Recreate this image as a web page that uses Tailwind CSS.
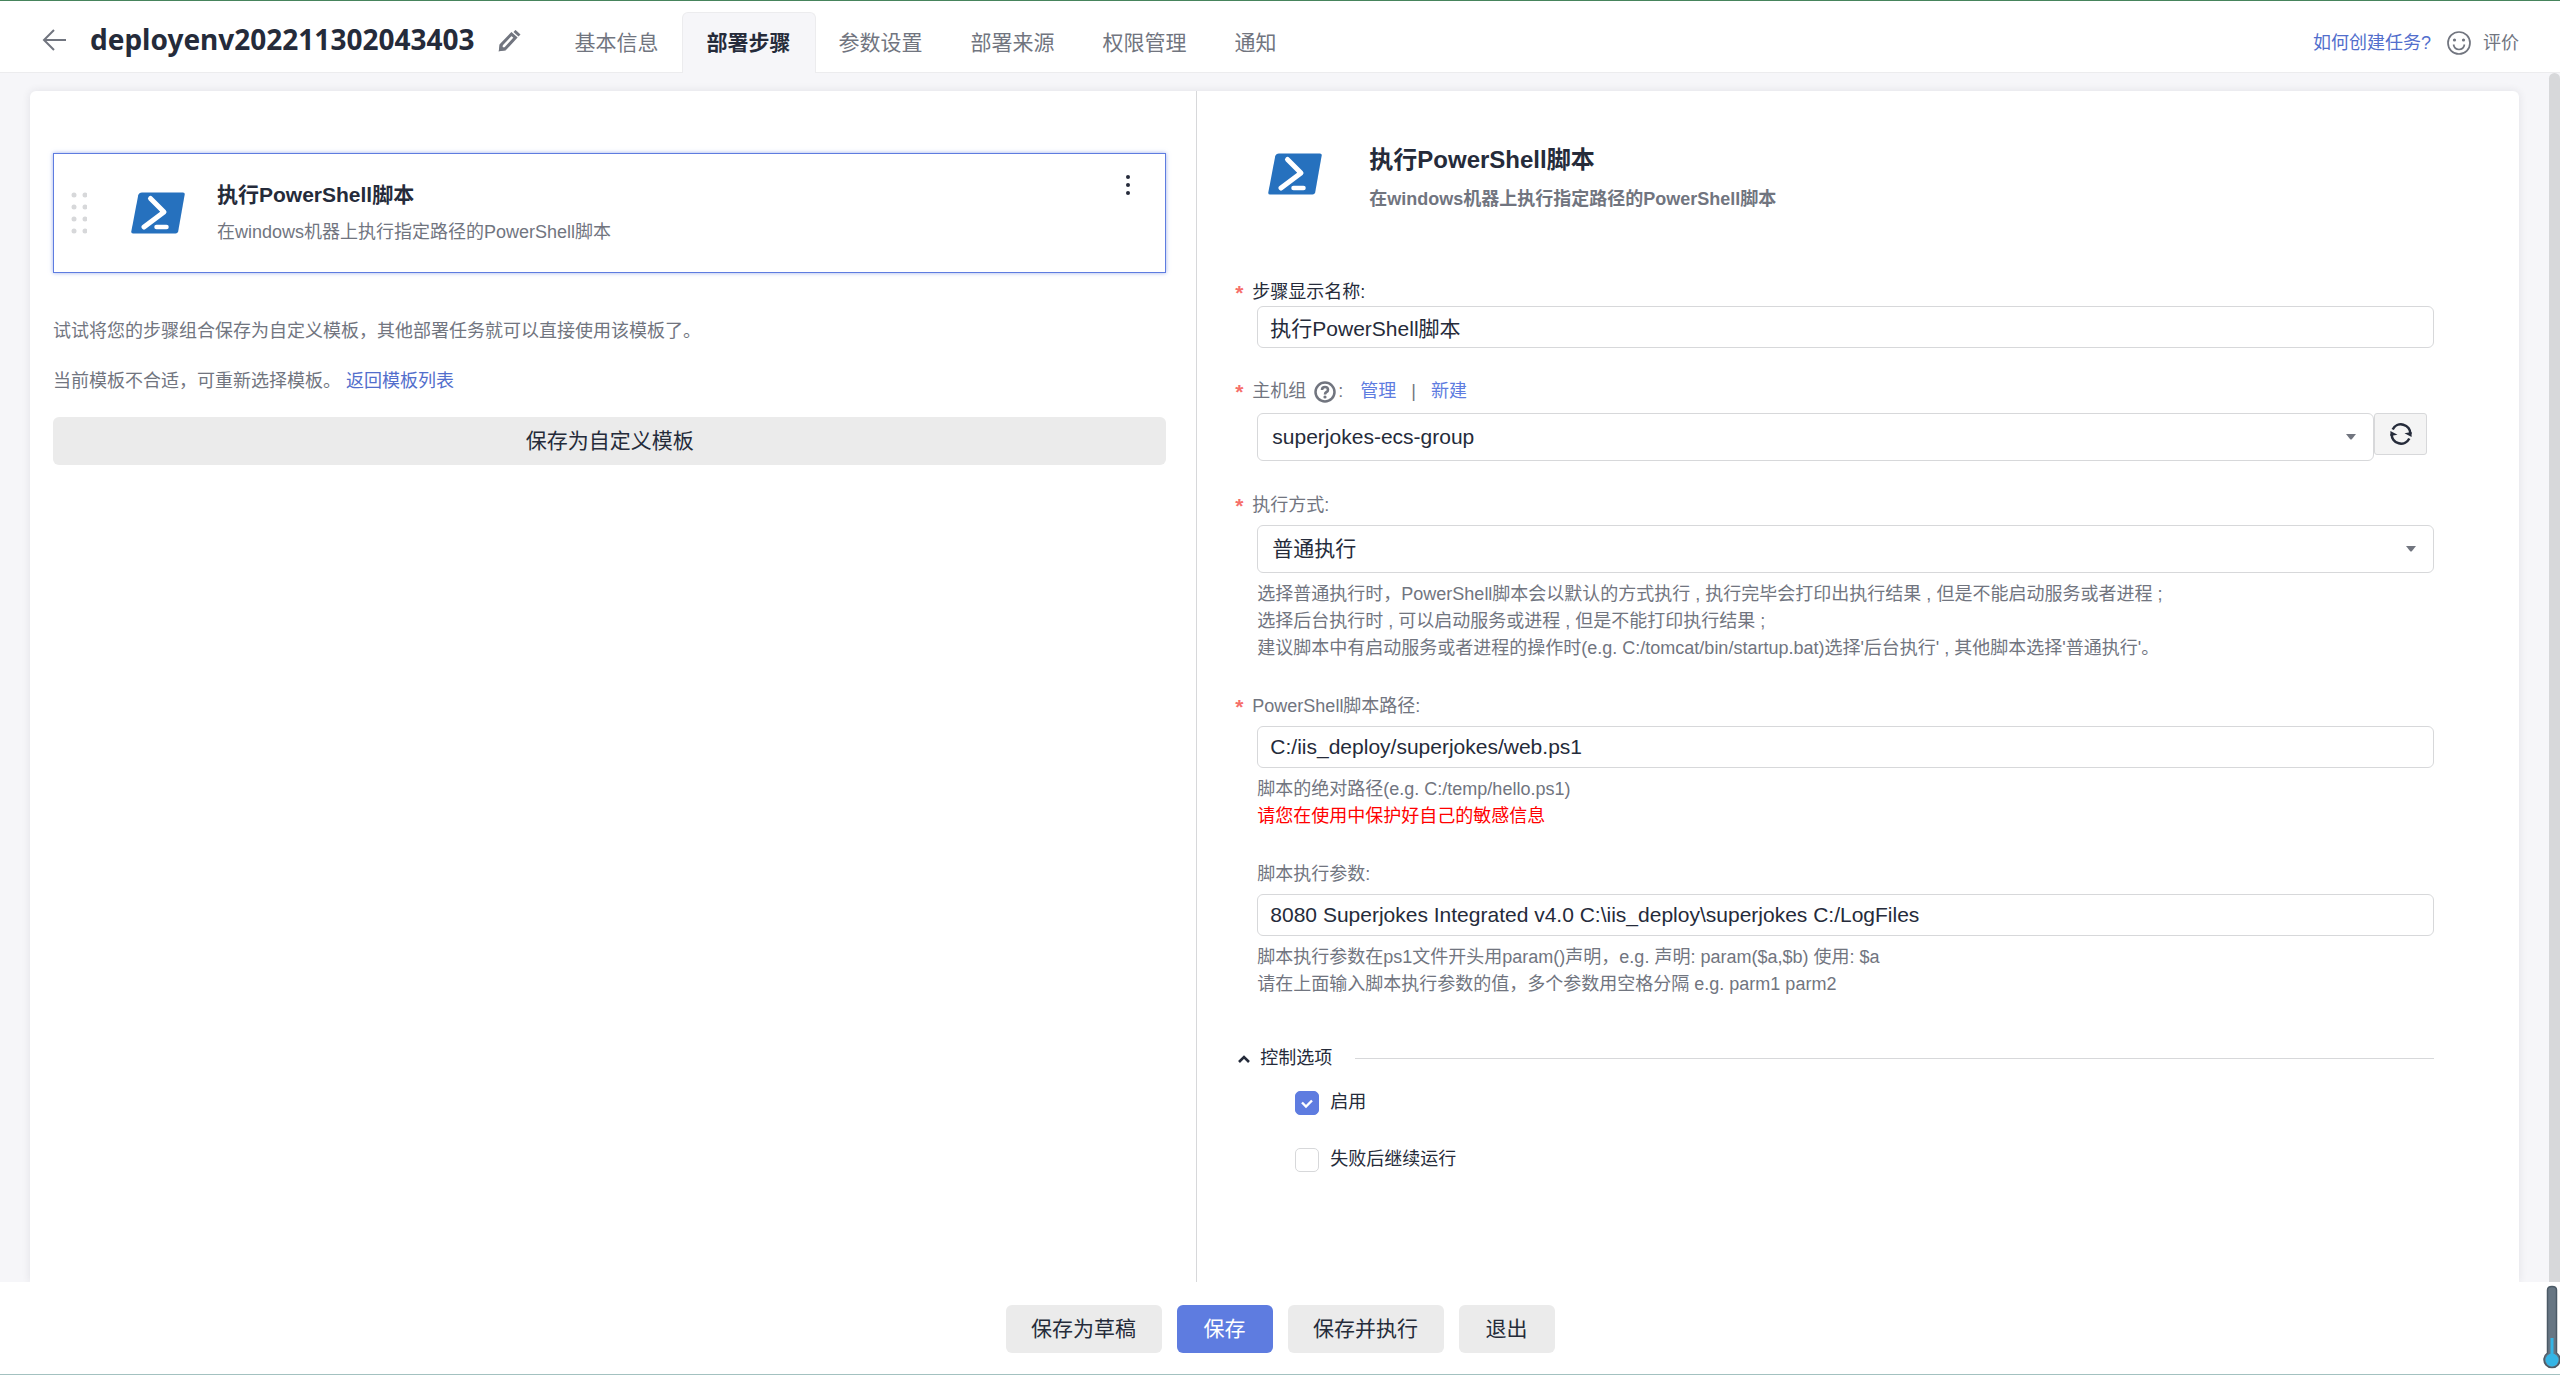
<!DOCTYPE html>
<html lang="zh-CN">
<head>
<meta charset="utf-8">
<meta name="viewport" content="width=device-width, initial-scale=1">
<title>deployenv202211302043403</title>
<script src="https://cdn.jsdelivr.net/npm/@tailwindcss/browser@4"></script>
</head>
<body class="flex min-h-screen flex-col bg-[#f6f6f9] font-['Liberation_Sans','Noto_Sans_CJK_SC',sans-serif] text-[18px] leading-[27px] text-[#71757f]">
  <svg class="hidden">
    <symbol id="powershell" viewBox="0 0 54 42">
      <path d="M11 .500H52q2 0 1.700 2L47.200 39.200q-.500 2.300-2.700 2.300H2q-2 0-1.700-2L7.200 3.200Q8 .500 11 .500Z" fill="#2671be"/>
      <path d="M19.500 6.500 33 20 13 35" fill="none" stroke="#fff" stroke-width="5" stroke-linecap="round" stroke-linejoin="round"/>
      <path d="M25.500 35h10" fill="none" stroke="#fff" stroke-width="4.500" stroke-linecap="round"/>
    </symbol>
    <symbol id="caret" viewBox="0 0 10 6"><path d="M0 0h10L6 5q-1 1-2 0Z" fill="#71757f"/></symbol>
  </svg>

  <header class="flex h-[73px] shrink-0 items-stretch border-t border-b border-t-[#46845c] border-b-[#ececee] bg-white pr-[41px] pl-[42px]">
    <button type="button" aria-label="返回" class="mr-[24px] flex items-center pt-[6px]">
      <svg class="h-[22px] w-[24px]" viewBox="0 0 24 22" fill="none" stroke="#71757f" stroke-width="2"><path d="M24 11H2M12 1 2 11l10 10"/></svg>
    </button>
    <h1 class="flex items-center pt-[4px] font-['Noto_Sans',sans-serif] text-[28px] leading-[40px] font-bold text-[#252b3a]">deployenv202211302043403</h1>
    <button type="button" aria-label="编辑名称" class="mr-[30px] ml-[23px] flex items-center pt-[8px]">
      <svg class="h-[22px] w-[23px]" viewBox="0 0 23 22" fill="none" stroke="#71757f" stroke-width="3"><path d="M2.500 19.500 3.500 14.500 13.500 4 17.500 7.500 7.500 18.500Z"/><path d="M16.500 1 21.500 5.500"/><path d="M1 21 1.500 14 8 20.500Z" fill="#71757f" stroke="none"/></svg>
    </button>
    <nav class="-mb-px flex items-stretch pt-[11px] text-[21px] leading-[30px]">
      <a href="#" class="flex items-center px-[24px]">基本信息</a>
      <a href="#" aria-current="page" class="-mx-px flex items-center rounded-t-[6px] border border-b-0 border-[#ececee] bg-[#f6f6f9] px-[24px] font-bold text-[#252b3a]">部署步骤</a>
      <a href="#" class="flex items-center px-[24px]">参数设置</a>
      <a href="#" class="flex items-center px-[24px]">部署来源</a>
      <a href="#" class="flex items-center px-[24px]">权限管理</a>
      <a href="#" class="flex items-center px-[24px]">通知</a>
    </nav>
    <div class="ml-auto flex items-center pt-[13px]">
      <a href="#" class="text-[#526ecc]">如何创建任务?</a>
      <button type="button" class="ml-[16px] flex items-center gap-[12px]">
        <svg class="size-[24px]" viewBox="0 0 24 24" fill="none" stroke="#71757f" stroke-width="1.700"><circle cx="12" cy="12" r="11"/><path d="M6.500 13.500q1 5 5.500 5t5.500-5"/><circle cx="7.500" cy="9" r="1.600" fill="#71757f" stroke="none"/><circle cx="16.500" cy="9" r="1.600" fill="#71757f" stroke="none"/></svg>
        评价
      </button>
    </div>
  </header>

  <main class="flex grow">
    <div class="mt-[18px] mr-[30px] ml-[30px] flex grow rounded-t-[6px] bg-white shadow-[0_0_8px_rgba(37,43,58,0.1)]">
      <section class="w-[46.9%] border-r border-[#d7d8da] pt-[62px] pr-[30px] pl-[23px]">
        <article class="flex h-[120px] items-start border border-[#5e7ce0] pr-[33px] pl-[17px] shadow-[0_0_4px_rgba(94,124,224,0.6)]">
          <svg class="mt-[37px] h-[44px] w-[16px]" viewBox="0 0 16 44" fill="#d7d8da"><circle cx="3" cy="4" r="2.500"/><circle cx="14" cy="4" r="2.500"/><circle cx="3" cy="16" r="2.500"/><circle cx="14" cy="16" r="2.500"/><circle cx="3" cy="28" r="2.500"/><circle cx="14" cy="28" r="2.500"/><circle cx="3" cy="40" r="2.500"/><circle cx="14" cy="40" r="2.500"/></svg>
          <svg class="mt-[38px] ml-[44px] h-[42px] w-[54px]"><use href="#powershell"/></svg>
          <div class="ml-[32px] grow pt-[26px]">
            <h2 class="text-[21px] leading-[30px] font-bold text-[#252b3a]">执行PowerShell脚本</h2>
            <p class="mt-[9px]">在windows机器上执行指定路径的PowerShell脚本</p>
          </div>
          <button type="button" aria-label="更多操作" class="mt-[20px]">
            <svg class="h-[22px] w-[8px]" viewBox="0 0 8 22" fill="#252b3a"><circle cx="4" cy="3" r="2"/><circle cx="4" cy="11" r="2"/><circle cx="4" cy="19" r="2"/></svg>
          </button>
        </article>
        <p class="mt-[45px]">试试将您的步骤组合保存为自定义模板，其他部署任务就可以直接使用该模板了。</p>
        <p class="mt-[23px]">当前模板不合适，可重新选择模板。 <a href="#" class="text-[#526ecc]">返回模板列表</a></p>
        <button type="button" class="mt-[22px] h-[48px] w-full rounded-[6px] bg-[#ebebeb] text-[21px] leading-[30px] text-[#252b3a]">保存为自定义模板</button>
      </section>

      <section class="grow pt-[54px] pr-[85px] pb-[60px] pl-[38px]">
        <div class="flex items-start">
          <svg class="mt-[8px] ml-[33px] h-[42px] w-[54px]"><use href="#powershell"/></svg>
          <div class="ml-[47px]">
            <h2 class="text-[24px] leading-[30px] font-bold text-[#252b3a]">执行PowerShell脚本</h2>
            <p class="mt-[11px] font-bold">在windows机器上执行指定路径的PowerShell脚本</p>
          </div>
        </div>

        <form class="mt-[66px]">
          <div>
            <label for="name" class="flex text-[#252b3a]"><span class="w-[17px] text-[21px] font-bold text-[#f66f6a]">*</span>步骤显示名称:</label>
            <div class="pl-[22px]">
              <input id="name" type="text" value="执行PowerShell脚本" class="h-[42px] w-full rounded-[6px] border border-[#d7d8da] px-[12px] text-[21px] leading-[30px] text-[#252b3a]">
            </div>
          </div>

          <div class="mt-[30px]">
            <div class="flex items-center">
              <label for="group" class="flex items-center"><span class="w-[17px] text-[21px] font-bold text-[#f66f6a]">*</span>主机组
                <svg class="ml-[8px] size-[22px]" viewBox="0 0 22 22" fill="none" stroke="#71757f" stroke-width="2.500"><circle cx="11" cy="11" r="9.500"/><path d="M8 9q0-3 3-3t3 2.700q0 1.500-1.500 2.300T11 13.500" stroke-width="2.600"/><circle cx="11" cy="16" r="1.600" fill="#71757f" stroke="none"/></svg>
                <span class="ml-[2px]">:</span></label>
              <a href="#" class="ml-[17px] text-[#5e7ce0]">管理</a>
              <span class="mx-[15px]">|</span>
              <a href="#" class="text-[#5e7ce0]">新建</a>
            </div>
            <div class="mt-[8px] flex items-start pr-[7px] pl-[22px]">
              <div class="relative grow">
                <select id="group" class="h-[48px] w-full appearance-none rounded-[6px] border border-[#d7d8da] bg-white px-[14px] text-[21px] leading-[30px] text-[#252b3a]"><option>superjokes-ecs-group</option></select>
                <svg class="pointer-events-none absolute top-[21px] right-[18px] h-[6px] w-[10px]"><use href="#caret"/></svg>
              </div>
              <button type="button" aria-label="刷新" class="flex h-[42px] w-[53px] items-center justify-center rounded-[3px] border border-[#d7d8da] bg-[#f4f4f4]">
                <svg class="size-[22px]" viewBox="0 0 22 22" fill="none" stroke="#252b3a" stroke-width="2.600"><path d="M2.700 6.500A9.300 9.300 0 0 1 20.300 11"/><path d="M19.300 15.500A9.300 9.300 0 0 1 1.700 11"/><path d="M14.500 10.200 21.600 9V14Z M7.500 11.800.4 13V8Z" fill="#252b3a" stroke="none"/></svg>
              </button>
            </div>
          </div>

          <div class="mt-[31px]">
            <label for="mode" class="flex"><span class="w-[17px] text-[21px] font-bold text-[#f66f6a]">*</span>执行方式:</label>
            <div class="mt-[6px] pl-[22px]">
              <div class="relative">
                <select id="mode" class="h-[48px] w-full appearance-none rounded-[6px] border border-[#d7d8da] bg-white px-[14px] text-[21px] leading-[30px] text-[#252b3a]"><option>普通执行</option></select>
                <svg class="pointer-events-none absolute top-[21px] right-[18px] h-[6px] w-[10px]"><use href="#caret"/></svg>
              </div>
              <p class="mt-[8px]">选择普通执行时，PowerShell脚本会以默认的方式执行 , 执行完毕会打印出执行结果 , 但是不能启动服务或者进程 ;<br>选择后台执行时 , 可以启动服务或进程 , 但是不能打印执行结果 ;<br>建议脚本中有启动服务或者进程的操作时(e.g. C:/tomcat/bin/startup.bat)选择'后台执行' , 其他脚本选择'普通执行'。</p>
            </div>
          </div>

          <div class="mt-[31px]">
            <label for="path" class="flex"><span class="w-[17px] text-[21px] font-bold text-[#f66f6a]">*</span>PowerShell脚本路径:</label>
            <div class="mt-[6px] pl-[22px]">
              <input id="path" type="text" value="C:/iis_deploy/superjokes/web.ps1" class="h-[42px] w-full rounded-[6px] border border-[#d7d8da] px-[12px] text-[21px] leading-[30px] text-[#252b3a]">
              <p class="mt-[8px]">脚本的绝对路径(e.g. C:/temp/hello.ps1)</p>
              <p class="text-[#ff0000]">请您在使用中保护好自己的敏感信息</p>
            </div>
          </div>

          <div class="mt-[31px] pl-[22px]">
            <label for="params" class="flex">脚本执行参数:</label>
            <input id="params" type="text" value="8080 Superjokes Integrated v4.0 C:\iis_deploy\superjokes C:/LogFiles" class="mt-[6px] h-[42px] w-full rounded-[6px] border border-[#d7d8da] px-[12px] text-[21px] leading-[30px] text-[#252b3a]">
            <p class="mt-[8px]">脚本执行参数在ps1文件开头用param()声明，e.g. 声明: param($a,$b) 使用: $a<br>请在上面输入脚本执行参数的值，多个参数用空格分隔 e.g. parm1 parm2</p>
          </div>

          <fieldset class="mt-[47px] text-[#252b3a]">
            <div class="flex items-center">
              <button type="button" class="flex items-center gap-[10px] pl-[3px]">
                <svg class="h-[8px] w-[12px]" viewBox="0 0 12 8" fill="none" stroke="#252b3a" stroke-width="2.600"><path d="M1 7 6 2l5 5"/></svg>
                控制选项
              </button>
              <span class="ml-[23px] h-px grow bg-[#d7d8da]"></span>
            </div>
            <label class="mt-[17px] flex items-center gap-[11px] pl-[60px]">
              <span class="relative flex size-[24px]">
                <input type="checkbox" checked class="size-[24px] appearance-none rounded-[5px] border border-[#d7d8da] bg-white checked:border-[#5e7ce0] checked:bg-[#5e7ce0]">
                <svg class="pointer-events-none absolute inset-0 size-[24px]" viewBox="0 0 24 24" fill="none" stroke="#fff" stroke-width="2.400"><path d="M7 11.500 11 15.500l6-6"/></svg>
              </span>
              启用
            </label>
            <label class="mt-[30px] flex items-center gap-[11px] pl-[60px]">
              <input type="checkbox" class="size-[24px] appearance-none rounded-[5px] border border-[#d7d8da] bg-white">
              失败后继续运行
            </label>
          </fieldset>
        </form>
      </section>
    </div>
    <div class="w-[11px] shrink-0 rounded-t-[6px] bg-[#d7d8da]"></div>
  </main>

  <footer class="relative z-10 flex h-[93px] shrink-0 justify-center gap-[15px] border-b border-[#a3c1c0] bg-white pt-[23px] text-[21px] leading-[30px] text-[#252b3a]">
    <button type="button" class="h-[48px] w-[156px] rounded-[6px] bg-[#ebebeb]">保存为草稿</button>
    <button type="button" class="h-[48px] w-[96px] rounded-[6px] bg-[#5e7ce0] text-white">保存</button>
    <button type="button" class="h-[48px] w-[156px] rounded-[6px] bg-[#ebebeb]">保存并执行</button>
    <button type="button" class="h-[48px] w-[96px] rounded-[6px] bg-[#ebebeb]">退出</button>
    <svg class="absolute top-[3px] right-0 h-[85px] w-[18px]" viewBox="0 0 18 85"><path d="M5.500 5Q5.500 1.500 10 1.500T14.500 5V68A8 8 0 1 1 5.500 68Z" fill="#677683" stroke="#4b5a66" stroke-width="1.500"/><path d="M10 53V74" stroke="#35b5e5" stroke-width="3"/><circle cx="10" cy="75" r="6.500" fill="#35b5e5"/></svg>
  </footer>
</body>
</html>
